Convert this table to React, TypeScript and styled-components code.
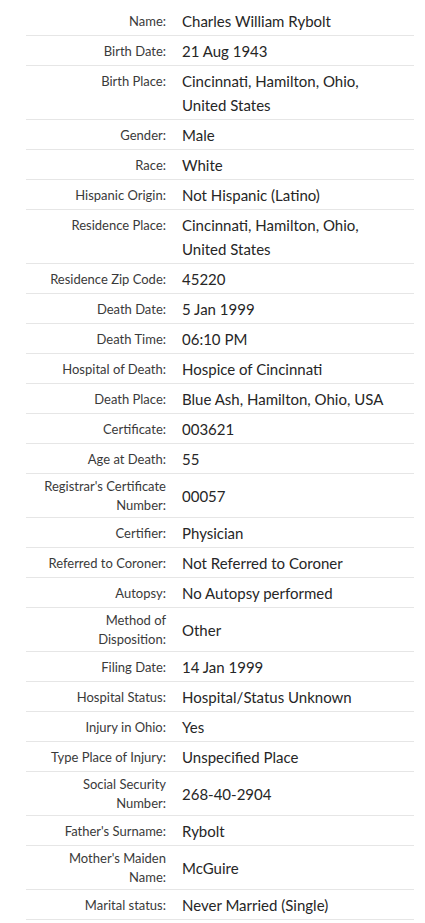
import React from "react";
import styled, { createGlobalStyle } from "styled-components";

const Global = createGlobalStyle`
  html, body { margin: 0; padding: 0; background: #fff; }
  body { font-family: Lato, "Open Sans", sans-serif; }
`;

const List = styled.dl`
  margin: 0;
  padding: 6px 0 0 26px;
  width: 388px;
`;

const Row = styled.div`
  display: flex;
  gap: 16px;
  padding: 3px 0 2px;
  border-bottom: 1px solid #e6e6e6;
`;

const Label = styled.dt<{ $top?: boolean }>`
  box-sizing: border-box;
  flex: 0 0 140px;
  padding-left: 13px;
  margin: 0;
  text-align: right;
  font-size: 13px;
  line-height: 19px;
  color: #3a3a3a;
  align-self: ${(p) => (p.$top ? "flex-start" : "center")};
  padding-top: ${(p) => (p.$top ? "3px" : "0")};
`;

const Value = styled.dd`
  flex: 1;
  margin: 0;
  padding-right: 12px;
  font-size: 15px;
  line-height: 24px;
  color: #262626;
  align-self: center;
`;

const rows: [string, string, boolean?][] = [
  ["Name:", "Charles William Rybolt"],
  ["Birth Date:", "21 Aug 1943"],
  ["Birth Place:", "Cincinnati, Hamilton, Ohio, United States", true],
  ["Gender:", "Male"],
  ["Race:", "White"],
  ["Hispanic Origin:", "Not Hispanic (Latino)"],
  ["Residence Place:", "Cincinnati, Hamilton, Ohio, United States", true],
  ["Residence Zip Code:", "45220"],
  ["Death Date:", "5 Jan 1999"],
  ["Death Time:", "06:10 PM"],
  ["Hospital of Death:", "Hospice of Cincinnati"],
  ["Death Place:", "Blue Ash, Hamilton, Ohio, USA"],
  ["Certificate:", "003621"],
  ["Age at Death:", "55"],
  ["Registrar's Certificate Number:", "00057"],
  ["Certifier:", "Physician"],
  ["Referred to Coroner:", "Not Referred to Coroner"],
  ["Autopsy:", "No Autopsy performed"],
  ["Method of Disposition:", "Other"],
  ["Filing Date:", "14 Jan 1999"],
  ["Hospital Status:", "Hospital/Status Unknown"],
  ["Injury in Ohio:", "Yes"],
  ["Type Place of Injury:", "Unspecified Place"],
  ["Social Security Number:", "268-40-2904"],
  ["Father's Surname:", "Rybolt"],
  ["Mother's Maiden Name:", "McGuire"],
  ["Marital status:", "Never Married (Single)"],
];

export default function App() {
  return (
    <>
      <Global />
      <List>
        {rows.map(([l, v, top]) => (
          <Row key={l}>
            <Label $top={top}>{l}</Label>
            <Value>{v}</Value>
          </Row>
        ))}
      </List>
    </>
  );
}
